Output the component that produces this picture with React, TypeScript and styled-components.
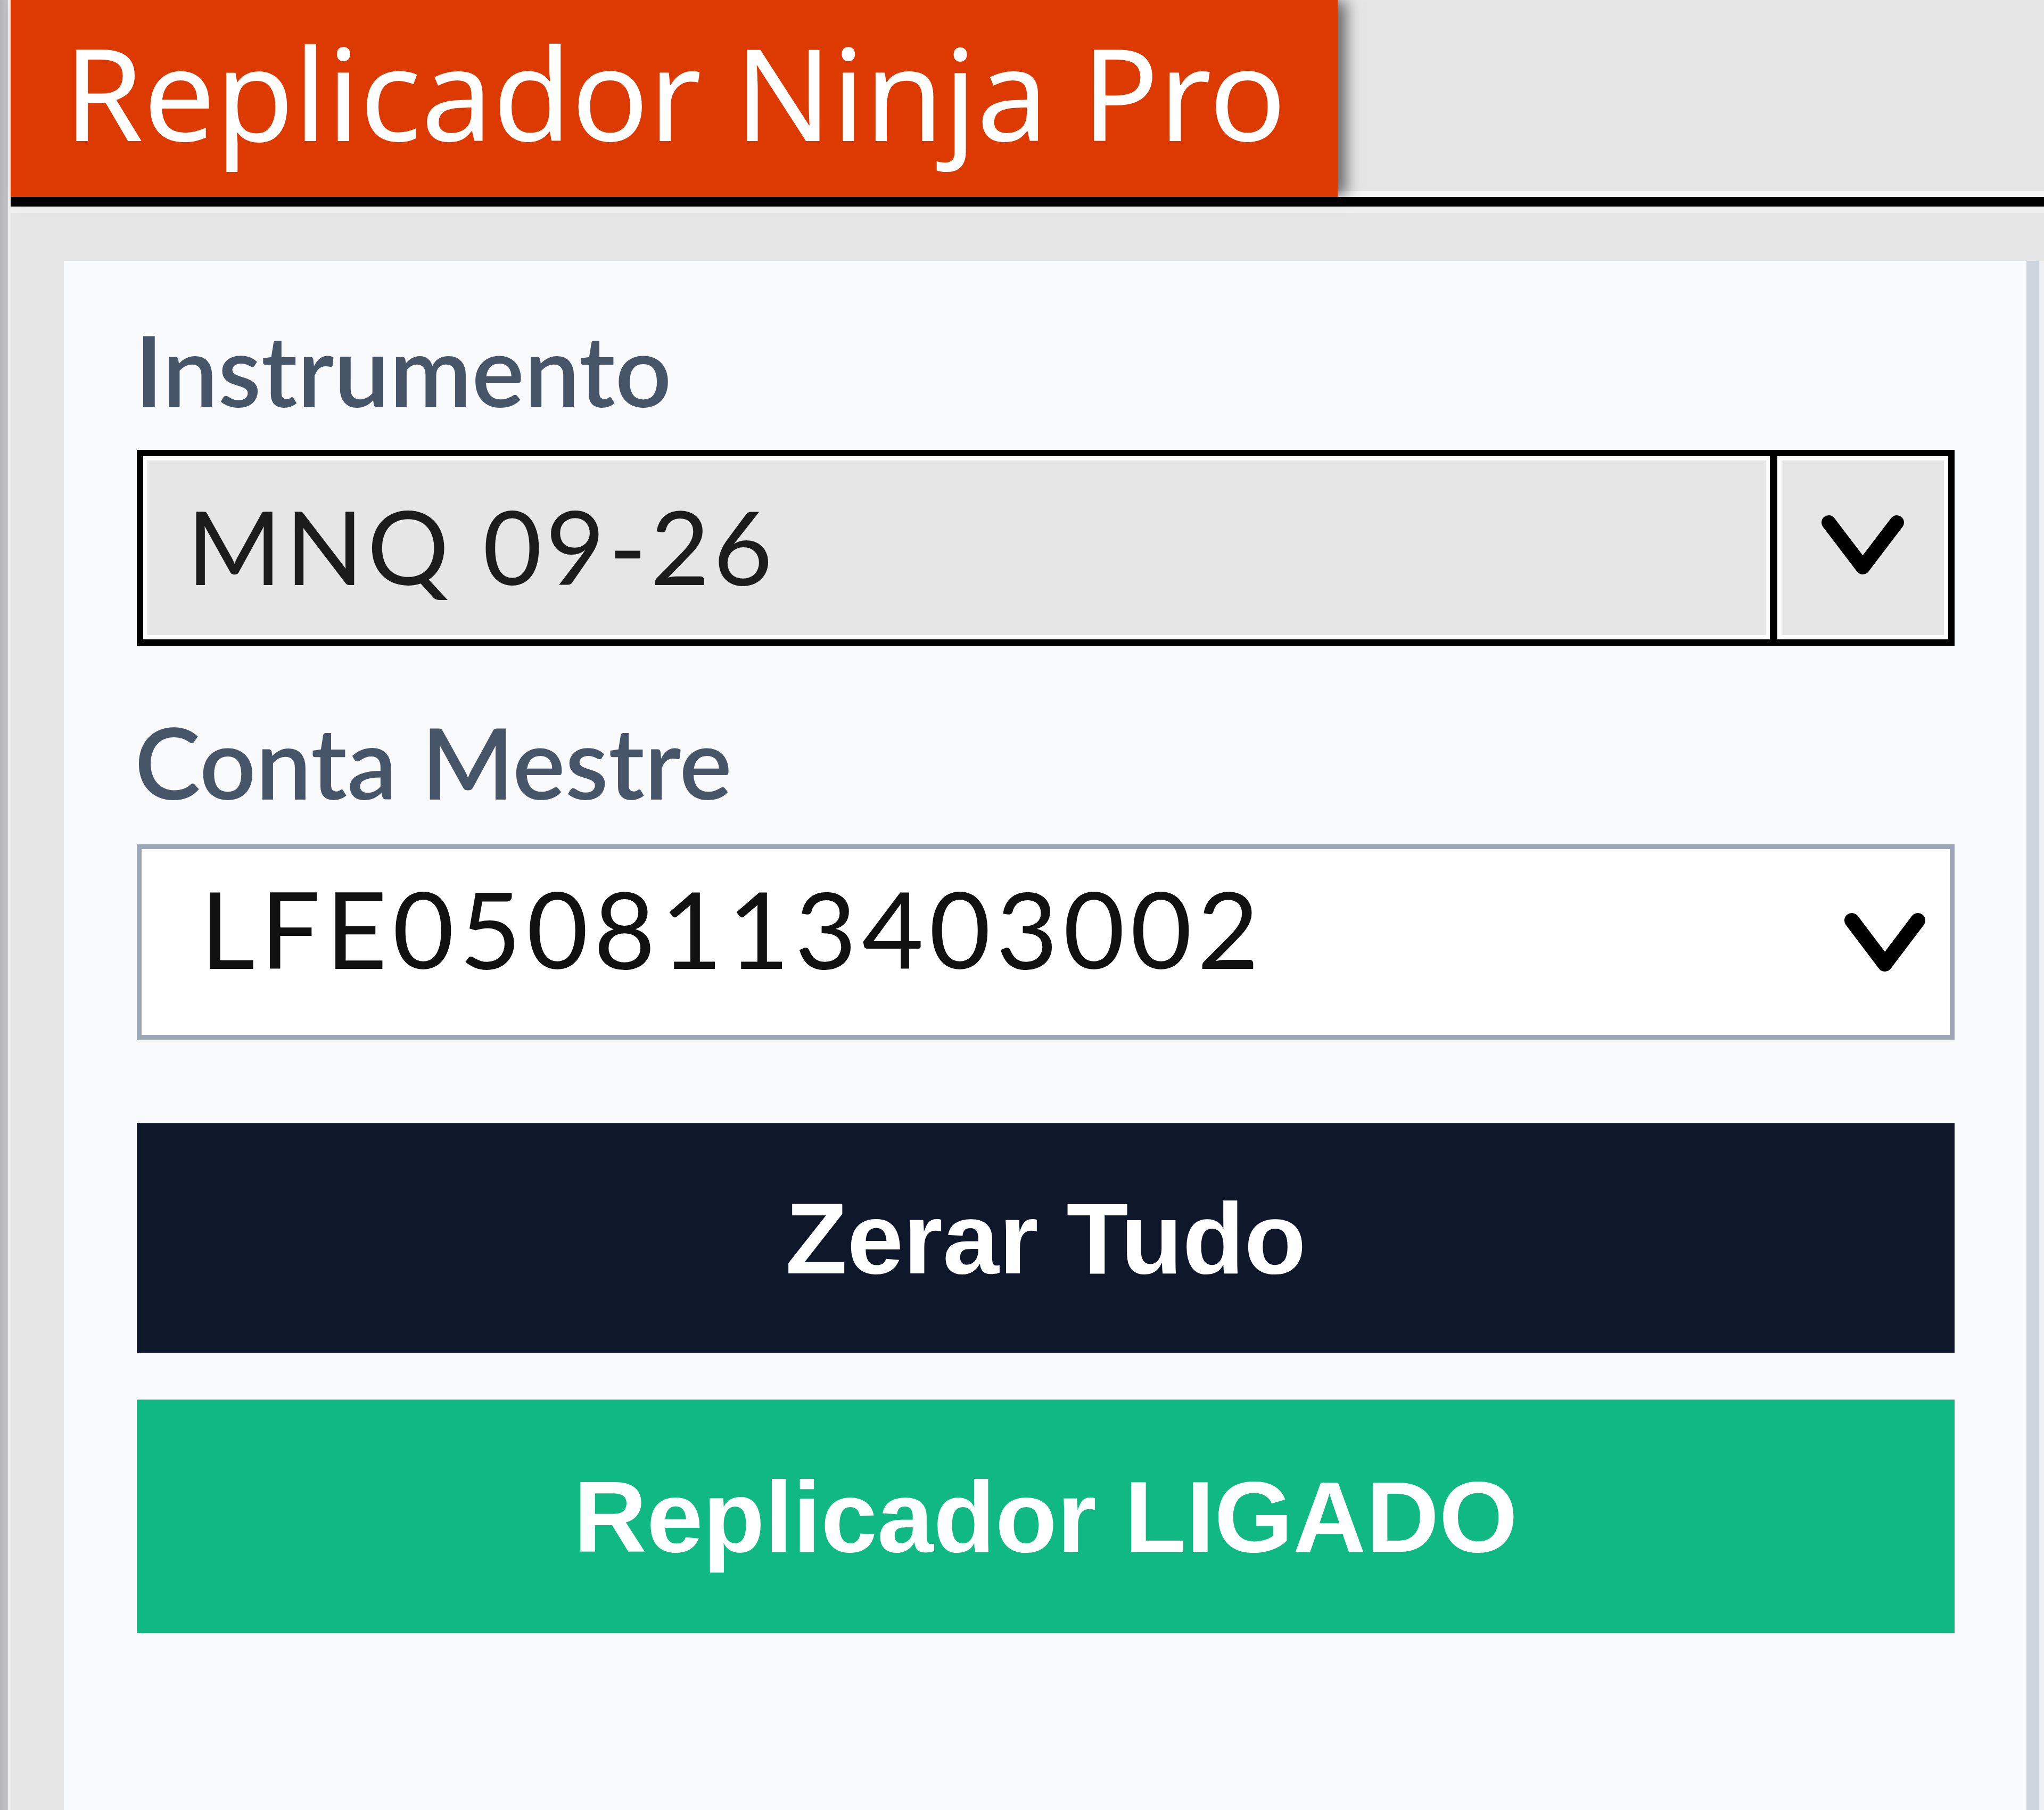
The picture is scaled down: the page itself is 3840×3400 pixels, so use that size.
import styled, { createGlobalStyle } from "styled-components";

const GlobalStyle = createGlobalStyle`
    *, *::before, *::after { box-sizing: border-box; }
    html, body { margin: 0; padding: 0; background: #e6e6e6; }
    body { width: 3840px; height: 3400px; overflow: hidden; }
`;

// V-shaped dropdown arrow: span is the centre-line width, drop its height
function Chevron({ span, drop, stroke }: { span: number; drop: number; stroke: number }) {
    const pad = stroke / 2 + 2;
    const w = span + pad * 2;
    const h = drop + pad * 2;
    return (
        <svg width={w} height={h} viewBox={`0 0 ${w} ${h}`}>
            <polyline
                points={`${pad},${pad} ${w / 2},${h - pad} ${w - pad},${pad}`}
                fill="none"
                stroke="#000"
                strokeWidth={stroke}
                strokeLinejoin="round"
                strokeLinecap="round"
            />
        </svg>
    )
}

export default function App() {
    return (
        <Page>
            <GlobalStyle />
            <LeftRail />
            <Main>
                <TitleBar>
                    <Tab>Replicador Ninja Pro</Tab>
                    <TabFill />
                </TitleBar>
                <Body>
                    <Panel>
                        <Label>Instrumento</Label>
                        <Combo>
                            <ComboValue>MNQ 09-26</ComboValue>
                            <ComboButton>
                                <Chevron span={128} drop={84} stroke={27} />
                            </ComboButton>
                        </Combo>

                        <Label $gap={125}>Conta Mestre</Label>
                        <Select>
                            <SelectValue>LFE0508113403002</SelectValue>
                            <Chevron span={124} drop={82} stroke={28} />
                        </Select>

                        <ActionButton $bg="#0f172a" $gap={157} $h={431}>Zerar Tudo</ActionButton>
                        <ActionButton $bg="#10b981" $gap={88} $h={439}>Replicador LIGADO</ActionButton>
                    </Panel>
                    <RightEdge />
                </Body>
            </Main>
        </Page>
    )
}

const Page = styled.div`
    display: flex;
    width: 3840px;
    height: 3400px;
    background: #e6e6e6;
`;

const LeftRail = styled.div`
    width: 15px;
    background: linear-gradient(to right, #b4b4b9, #c6c6ca);
`;

const Main = styled.div`
    flex: 1;
    display: flex;
    flex-direction: column;
    padding-left: 5px;
    background: linear-gradient(to right, #eeeef0 0, #eeeef0 20px, #e6e6e7 30px);
`;

const TitleBar = styled.div`
    display: flex;
    height: 388px;
    border-bottom: 18px solid #000;
`;

const Tab = styled.div`
    position: relative;
    z-index: 1;
    width: 2493px;
    padding: 52px 0 0 100px;
    background: #dc3a00;
    color: #fff;
    font-family: "Noto Sans", sans-serif;
    font-size: 240px;
    line-height: 1;
    white-space: nowrap;
    box-shadow: 18px 0 26px -2px rgba(0, 0, 0, 0.55);
`;

const TabFill = styled.div`
    flex: 1;
    background: #e6e6e6;
    border-bottom: 11px solid #f6f6f6;
`;

const Body = styled.div`
    flex: 1;
    display: flex;
    padding: 90px 0 0 100px;
    border-top: 12px solid #f0f0f0;
    background: #e6e6e7;
`;

const Panel = styled.div`
    width: 3710px;
    display: flex;
    flex-direction: column;
    padding: 111px 135px 0 137px;
    background: #f8fafc;
    border-right: 23px solid #cdd5df;
`;

const RightEdge = styled.div`
    flex: 1;
    background: #eef2f7;
`;

const Label = styled.div<{ $gap?: number }>`
    margin-top: ${p => p.$gap ?? 0}px;
    margin-left: -4px;
    font-family: Lato, "Open Sans", sans-serif;
    font-weight: 600;
    font-size: 186px;
    line-height: 184px;
    color: #475569;
    white-space: nowrap;
`;

const Combo = styled.div`
    display: flex;
    height: 368px;
    margin-top: 60px;
    border: 12px solid #000;
    background: #e6e6e6;
`;

const ComboValue = styled.div`
    flex: 1;
    display: flex;
    align-items: center;
    padding: 0 0 10px 82px;
    box-shadow: inset 0 0 0 8px #fff;
    font-family: Lato, "Open Sans", sans-serif;
    font-size: 192px;
    letter-spacing: 7px;
    color: #1c1c1c;
    white-space: nowrap;
`;

const ComboButton = styled.div`
    width: 335px;
    display: flex;
    align-items: center;
    justify-content: center;
    padding-bottom: 12px;
    border-left: 14px solid #000;
    box-shadow: inset 0 0 0 8px #fff;
`;

const Select = styled.div`
    display: flex;
    align-items: center;
    justify-content: space-between;
    height: 367px;
    margin-top: 64px;
    padding: 0 44px 0 110px;
    border: 9px solid #9ba6b6;
    background: #fff;
`;

const SelectValue = styled.span`
    margin-bottom: 54px;
    font-family: Lato, "Open Sans", sans-serif;
    font-size: 200px;
    letter-spacing: 10px;
    color: #111;
    white-space: nowrap;
`;

const ActionButton = styled.button<{ $bg: string; $gap: number; $h: number }>`
    display: flex;
    align-items: center;
    justify-content: center;
    height: ${p => p.$h}px;
    margin-top: ${p => p.$gap}px;
    padding: 0;
    border: 0;
    background: ${p => p.$bg};
    color: #fff;
    font-family: "Liberation Sans", Arial, sans-serif;
    font-weight: 700;
    font-size: 190px;
    white-space: nowrap;
`;
